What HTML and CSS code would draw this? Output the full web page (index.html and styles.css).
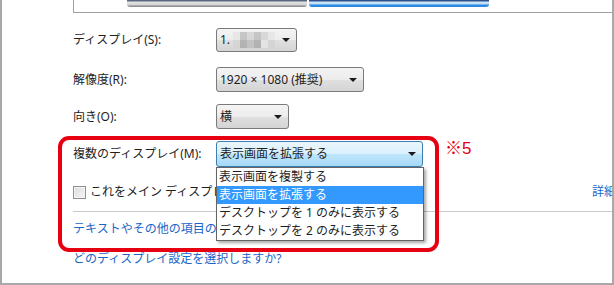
FILE: index.html
```html
<!DOCTYPE html>
<html lang="ja">
<head>
  <meta charset="UTF-8">
  <title>画面の解像度</title>
  <link rel="stylesheet" href="styles.css">
</head>
<body>
  <div class="frame">
    <div class="preview">
      <div class="monitor monitor-gray"></div>
      <div class="monitor monitor-blue"></div>
    </div>

    <div class="form">
      <div class="row row-display">
        <span class="label">ディスプレイ(S):</span>
        <div class="combo combo-display">
          <span class="value">1.</span>
          <span class="mosaic">
            <i class="m4"></i><i class="m2"></i><i class="m1"></i><i class="m2"></i><i class="m1"></i><i class="m4"></i>
            <i class="m1"></i><i class="m3"></i><i class="m2"></i><i class="m3"></i><i class="m4"></i><i class="m1"></i>
          </span>
          <span class="arrow"></span>
        </div>
      </div>

      <div class="row row-resolution">
        <span class="label">解像度(R):</span>
        <div class="combo combo-resolution">
          <span class="value">1920 × 1080 (推奨)</span>
          <span class="arrow"></span>
        </div>
      </div>

      <div class="row row-orientation">
        <span class="label">向き(O):</span>
        <div class="combo combo-orientation">
          <span class="value">横</span>
          <span class="arrow"></span>
        </div>
      </div>

      <div class="row row-multi">
        <span class="label">複数のディスプレイ(M):</span>
        <div class="combo combo-multi is-open">
          <span class="value">表示画面を拡張する</span>
          <span class="arrow"></span>
          <ul class="combo-list">
            <li>表示画面を複製する</li>
            <li class="selected">表示画面を拡張する</li>
            <li>デスクトップを 1 のみに表示する</li>
            <li>デスクトップを 2 のみに表示する</li>
          </ul>
        </div>
      </div>

      <div class="row check-row">
        <span class="checkbox"></span>
        <span class="check-label">これをメイン ディスプレイにする(K)</span>
        <a class="link link-advanced" href="#">詳細設定</a>
      </div>

      <div class="separator"></div>

      <div class="row link-row">
        <a class="link" href="#">テキストやその他の項目の大きさを変更します</a>
      </div>

      <div class="row link-row link-row-last">
        <a class="link" href="#">どのディスプレイ設定を選択しますか?</a>
      </div>
    </div>

    <!-- annotation over the screenshot -->
    <div class="highlight"></div>
    <span class="note">※5</span>
  </div>
</body>
</html>
```

FILE: styles.css
```css
* {
  box-sizing: border-box;
  margin: 0;
  padding: 0;
}
body {
  font-family: "Noto Sans", "Noto Sans CJK JP", sans-serif;
  font-size: 12px;
  color: #1e1e1e;
  background: #fff;
}
.frame {
  position: relative;
  width: 614px;
  height: 285px;
  border: 2px solid #a8a8a8;
  border-top: none;
  overflow: hidden;
}

/* monitor preview at the top */
.preview {
  display: flex;
  gap: 2px;
  height: 13px;
  margin-left: 71px;
  padding-left: 53px;
  border-left: 1px solid #a0a0a0;
  border-bottom: 1px solid #a0a0a0;
}
.monitor {
  width: 180px;
  height: 7px;
  border-radius: 0 0 3px 3px;
}
.monitor-gray {
  background: linear-gradient(#5b6680 0, #5b6680 1px, #e4e4e4 2px, #d2d2d2 5px, #8e8e8e 6px, #8e8e8e 7px);
}
.monitor-blue {
  background: linear-gradient(#2f4f8a 0, #2f4f8a 1px, #d3e9fb 2px, #b9dcf8 4px, #2e8ae0 5px, #2e8ae0 7px);
}

/* settings rows */
.form {
  padding-left: 71px;
}
.row {
  display: flex;
  align-items: center;
  line-height: 18px;
}
.label {
  width: 143px;
  flex-shrink: 0;
}
.row-display {
  margin-top: 15px;
}
.row-resolution {
  margin-top: 15px;
}
.row-orientation,
.row-multi {
  margin-top: 12px;
}

.combo {
  position: relative;
  display: flex;
  align-items: center;
  height: 25px;
  padding-left: 3px;
  border: 1px solid #7a7a7a;
  border-radius: 3px;
  background: linear-gradient(#f4f4f4 0%, #ececec 50%, #e0e0e0 51%, #d4d4d4 100%);
}
.combo .value {
  flex: 1;
  white-space: nowrap;
}
.combo-display {
  width: 81px;
  height: 24px;
}
.combo-display .value {
  flex: 0 0 auto;
  margin-right: 3px;
}
.combo-resolution {
  width: 148px;
}
.combo-orientation {
  width: 73px;
}
.combo-multi {
  width: 207px;
  height: 26px;
}
.combo.is-open {
  border-color: #3c7fb1;
  background: linear-gradient(#eaf6fd 0%, #d9f0fc 50%, #bee6fd 51%, #a7d9f5 100%);
}
.arrow {
  width: 0;
  height: 0;
  margin: 0 6px 0 auto;
  border-left: 4px solid transparent;
  border-right: 4px solid transparent;
  border-top: 4px solid #1a1a1a;
}

/* blurred display name */
.mosaic {
  display: grid;
  grid-template-columns: repeat(6, 7px);
  grid-auto-rows: 8px;
  opacity: 0.85;
}
.mosaic i {
  display: block;
}
.m1 { background: #d4d4d4; }
.m2 { background: #bfbfbf; }
.m3 { background: #acacac; }
.m4 { background: #e6e6e6; }

/* open dropdown list */
.combo-list {
  position: absolute;
  top: 25px;
  left: -1px;
  width: 208px;
  list-style: none;
  background: #fff;
  border: 1px solid #646464;
  box-shadow: 2px 2px 3px rgba(0, 0, 0, 0.35);
  z-index: 2;
}
.combo-list li {
  height: 18px;
  line-height: 18px;
  padding-left: 2px;
  white-space: nowrap;
}
.combo-list li.selected {
  background: #3399ff;
  color: #fff;
}

.check-row {
  margin-top: 16px;
  margin-right: -28px;
}
.checkbox {
  width: 13px;
  height: 13px;
  margin-right: 4px;
  border: 1px solid #8f8f8f;
  background: linear-gradient(135deg, #dcdcdc, #f6f6f6);
  box-shadow: inset 0 0 0 1px #f4f4f4;
}
.check-label {
  white-space: nowrap;
}
.link {
  color: #1a66c9;
  text-decoration: none;
  white-space: nowrap;
}
.link-advanced {
  margin-left: auto;
}
.separator {
  margin-top: 10px;
  height: 1px;
  background: #c9c9c9;
}
.link-row {
  margin-top: 8px;
}
.link-row-last {
  margin-top: 12px;
}

/* red annotation */
.highlight {
  position: absolute;
  left: 56px;
  top: 136px;
  width: 381px;
  height: 116px;
  border: 4px solid #e60012;
  border-radius: 11px;
  z-index: 3;
}
.note {
  position: absolute;
  left: 443px;
  top: 134px;
  font-family: "Liberation Sans", "Noto Sans CJK JP", sans-serif;
  font-size: 17px;
  color: #e60012;
}
```
